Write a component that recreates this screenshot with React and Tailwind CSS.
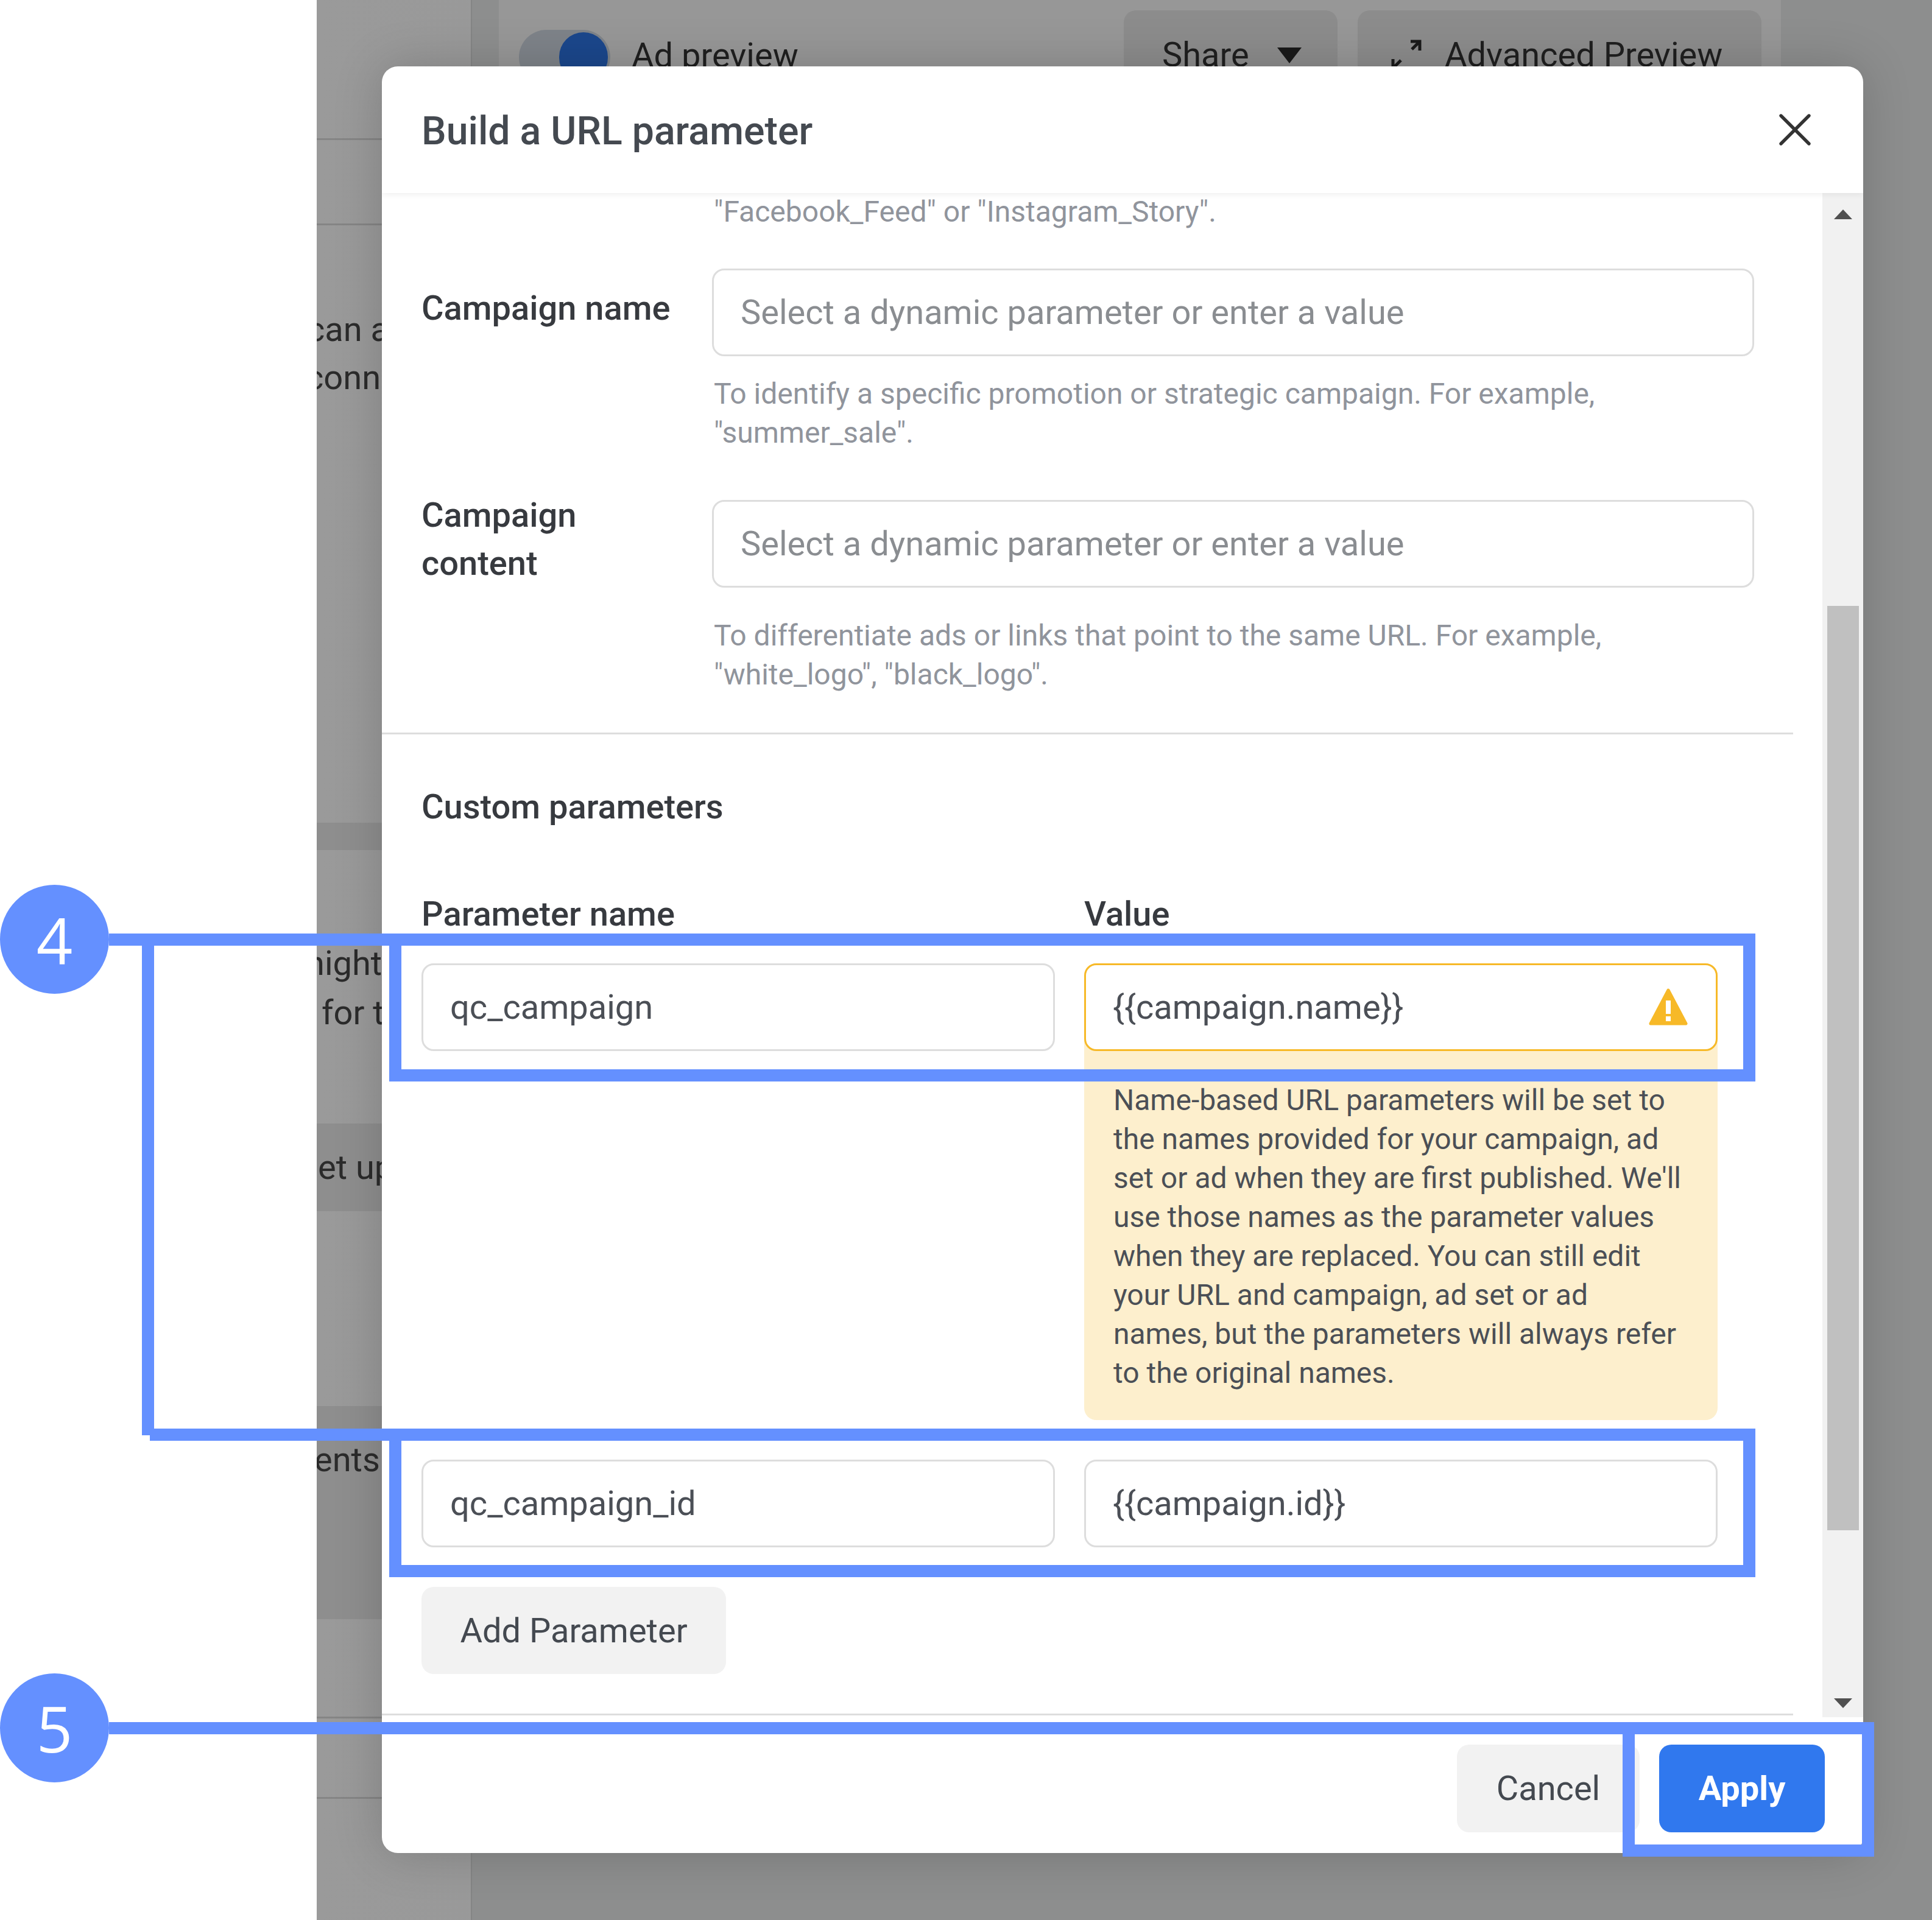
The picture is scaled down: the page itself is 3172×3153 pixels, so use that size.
import React from "react";
import { X } from "lucide-react";

const warningLines = [
  "Name-based URL parameters will be set to",
  "the names provided for your campaign, ad",
  "set or ad when they are first published. We'll",
  "use those names as the parameter values",
  "when they are replaced. You can still edit",
  "your URL and campaign, ad set or ad",
  "names, but the parameters will always refer",
  "to the original names.",
];

const Field = ({ value, placeholder, warning }) => (
  <div
    className={`flex h-[144px] items-center justify-between rounded-[20px] border-[3px] bg-white pl-[44px] pr-[46px] text-[56px] ${
      warning ? "border-[#f7b928]" : "border-[#dddddd]"
    } ${placeholder ? "text-[#8a8d91]" : "text-[#4b4f56]"}`}
  >
    <span className="whitespace-nowrap">{value || placeholder}</span>
    {warning && (
      <svg viewBox="0 0 64 62" className="h-[62px] w-[64px]">
        <path d="M32 3 L61 58 H3 Z" fill="#f7b928" stroke="#f7b928" strokeWidth="5" strokeLinejoin="round" />
        <rect x="28" y="20" width="8" height="22" fill="#fff" />
        <rect x="28" y="46" width="8" height="8" fill="#fff" />
      </svg>
    )}
  </div>
);

const Helper = ({ children, className = "" }) => (
  <p className={`pl-[3px] text-[48px] leading-[64px] whitespace-nowrap text-[#90949c] ${className}`}>{children}</p>
);

const Label = ({ children }) => (
  <div className="flex h-[144px] w-[477px] shrink-0 items-center pb-[14px] text-[56px] font-medium leading-[79px] text-[#373a3f]">
    <span>{children}</span>
  </div>
);

const SideRow = ({ h, dark, line, children, textClass = "" }) => (
  <div
    className={`relative whitespace-nowrap text-[56px] text-[#2b2b2b] ${h} ${dark ? "bg-[#8e8e8e]" : ""} ${
      line ? "border-b-[3px] border-[#858585]" : ""
    } ${textClass}`}
  >
    {children}
  </div>
);

const Background = () => (
  <div className="flex min-w-0 flex-1 overflow-hidden bg-gradient-to-r from-[#9a9a9a] to-[#8f9091]">
    <div className="w-[253px] shrink-0 overflow-hidden">
      <SideRow h="h-[230px]" line />
      <SideRow h="h-[140px]" line />
      <SideRow h="h-[981px]" textClass="pt-[132px] leading-[79px]">
        <div className="-ml-[16px]">can a</div>
        <div className="-ml-[18px]">conn</div>
      </SideRow>
      <SideRow h="h-[45px]" dark />
      <SideRow h="h-[449px]" textClass="pt-[146px] leading-[81px]">
        <div className="-ml-[18px]">night</div>
        <div className="ml-[8px]">for t</div>
      </SideRow>
      <SideRow h="h-[144px]" dark textClass="flex items-center">
        <div className="ml-[2px]">et up</div>
      </SideRow>
      <SideRow h="h-[320px]" />
      <SideRow h="h-[350px]" dark textClass="pt-[48px] leading-[80px]">
        <div className="-ml-[4px]">ents</div>
      </SideRow>
      <SideRow h="h-[163px]" line />
      <SideRow h="h-[132px]" line />
    </div>
    <div className="min-w-0 flex-1 border-l-[2px] border-[#848585] bg-[#8d8e8e]">
      <div className="ml-[44px] flex h-[200px] w-[2105px] items-start justify-between bg-[#979797] pl-[33px] pr-[32px] text-[56px] leading-[64px] text-[#1f1f1f]">
        <div className="flex items-start">
          <div className="mt-[49px] flex h-[90px] w-[150px] justify-end rounded-full bg-[#7e8389] p-[4px]">
            <div className="h-[82px] w-[80px] rounded-full bg-[#1b478c]"></div>
          </div>
          <span className="ml-[35px] mt-[59px] whitespace-nowrap">Ad preview</span>
        </div>
        <div className="flex items-start gap-[33px]">
          <div className="mt-[17px] flex h-[150px] w-[351px] items-start rounded-[20px] bg-[#8c8c8c] pl-[63px] pt-[41px]">
            Share
            <svg viewBox="0 0 40 26" className="ml-[46px] mt-[20px] h-[26px] w-[40px]">
              <path d="M0 0H40L20 26Z" fill="#1a1a1a" />
            </svg>
          </div>
          <div className="mt-[17px] flex h-[150px] w-[663px] items-start rounded-[20px] bg-[#8c8c8c] pl-[55px] pt-[41px]">
            <svg viewBox="0 0 50 50" className="mr-[38px] mt-[7px] h-[50px] w-[50px]" fill="none" stroke="#1a1a1a" strokeWidth="5">
              <path d="M32 3H47V18M47 3L34 16M3 32V47H18M3 47L16 34" />
            </svg>
            Advanced Preview
          </div>
        </div>
      </div>
    </div>
  </div>
);

const Modal = () => (
  <div className="absolute left-[627px] top-[109px] flex h-[2934px] w-[2432px] flex-col overflow-hidden rounded-[26px] bg-white shadow-[0_0_80px_rgba(0,0,0,0.18)]">
    <div className="relative z-10 flex h-[208px] shrink-0 items-center justify-between pl-[65px] pr-[66px] shadow-[0_2px_10px_rgba(0,0,0,0.07)]">
      <h1 className="pt-[5px] text-[64.4px] font-medium text-[#444950]">Build a URL parameter</h1>
      <X className="h-[92px] w-[92px] text-[#333]" strokeWidth={1.4} />
    </div>

    <div className="flex min-h-0 flex-1">
      <div className="w-[2365px] shrink-0 overflow-hidden pr-[48px]">
        <div className="pl-[65px] pr-[64px]">
          <Helper className="-mt-[1px] ml-[477px]">"Facebook_Feed" or "Instagram_Story".</Helper>

          <div className="mt-[61px] flex">
            <Label>Campaign name</Label>
            <div className="flex-1">
              <Field placeholder="Select a dynamic parameter or enter a value" />
              <Helper className="mt-[30px]">
                To identify a specific promotion or strategic campaign. For example,
                <br />
                "summer_sale".
              </Helper>
            </div>
          </div>

          <div className="mt-[78px] flex">
            <Label>
              Campaign
              <br />
              content
            </Label>
            <div className="flex-1">
              <Field placeholder="Select a dynamic parameter or enter a value" />
              <Helper className="mt-[47px]">
                To differentiate ads or links that point to the same URL. For example,
                <br />
                "white_logo", "black_logo".
              </Helper>
            </div>
          </div>
        </div>

        <div className="mt-[63px] h-[3px] bg-[#dddddd]"></div>

        <div className="pl-[65px] pr-[124px]">
          <h2 className="mt-[87px] text-[56px] font-medium leading-[64px] text-[#373a3f]">Custom parameters</h2>

          <div className="mt-[112px] grid grid-cols-2 gap-x-[48px] text-[56px] font-medium leading-[64px] text-[#373a3f]">
            <span>Parameter name</span>
            <span>Value</span>
          </div>

          <div className="mt-[49px] grid grid-cols-2 items-start gap-x-[48px]">
            <Field value="qc_campaign" />
            <div className="rounded-[20px] bg-[#fdefcd]">
              <Field value="{{campaign.name}}" warning />
              <div className="pb-[45px] pl-[48px] pt-[49px] text-[48px] leading-[64px] text-[#4b4f56]">
                {warningLines.map((line) => (
                  <div key={line} className="whitespace-nowrap">
                    {line}
                  </div>
                ))}
              </div>
            </div>
          </div>

          <div className="mt-[65px] grid grid-cols-2 gap-x-[48px]">
            <Field value="qc_campaign_id" />
            <Field value="{{campaign.id}}" />
          </div>

          <button className="mt-[65px] h-[143px] w-[500px] rounded-[20px] bg-[#f2f2f2] text-[56px] text-[#444950]">
            Add Parameter
          </button>
        </div>

        <div className="mt-[65px] h-[3px] bg-[#dddddd]"></div>
      </div>

      <div className="flex w-[67px] shrink-0 flex-col items-center bg-[#f1f1f1]">
        <svg viewBox="0 0 30 16" className="mt-[27px] h-[16px] w-[30px]">
          <path d="M15 0L30 16H0Z" fill="#505050" />
        </svg>
        <div className="mt-[635px] h-[1518px] w-[52px] bg-[#c0c0c0]"></div>
        <svg viewBox="0 0 30 16" className="mt-[276px] h-[16px] w-[30px]">
          <path d="M0 0H30L15 16Z" fill="#505050" />
        </svg>
      </div>
    </div>

    <div className="flex h-[223px] shrink-0 justify-end gap-[32px] pr-[63px] pt-[45px]">
      <button className="h-[144px] w-[300px] rounded-[20px] bg-[#f2f2f2] text-[56px] text-[#444950]">Cancel</button>
      <button className="h-[144px] w-[272px] rounded-[20px] bg-[#3078ee] text-[56px] font-bold text-white">Apply</button>
    </div>
  </div>
);

const Annotations = () => (
  <>
    <div className="absolute left-0 top-[1453px] flex h-[179px] w-[179px] items-center justify-center rounded-full bg-[#6490ff] font-['Open_Sans',sans-serif] text-[104px] text-white">
      4
    </div>
    <div className="absolute left-[179px] top-[1533px] h-[20px] w-[460px] bg-[#6490ff]"></div>
    <div className="absolute left-[233px] top-[1533px] h-[824px] w-[20px] bg-[#6490ff]"></div>
    <div className="absolute left-[246px] top-[2346px] h-[20px] w-[393px] bg-[#6490ff]"></div>
    <div className="absolute left-[639px] top-[1533px] h-[243px] w-[2243px] border-[20px] border-[#6490ff]"></div>
    <div className="absolute left-[639px] top-[2346px] h-[244px] w-[2243px] border-[20px] border-[#6490ff]"></div>

    <div className="absolute left-0 top-[2748px] flex h-[179px] w-[179px] items-center justify-center rounded-full bg-[#6490ff] font-['Open_Sans',sans-serif] text-[104px] text-white">
      5
    </div>
    <div className="absolute left-[179px] top-[2828px] h-[20px] w-[2485px] bg-[#6490ff]"></div>
    <div className="absolute left-[2664px] top-[2828px] h-[221px] w-[413px] border-[20px] border-[#6490ff]"></div>
  </>
);

export default function App() {
  return (
    <div className="relative flex h-[3153px] w-[3172px] overflow-hidden bg-white font-['Roboto',sans-serif]">
      <div className="w-[520px] shrink-0 bg-white"></div>
      <Background />
      <Modal />
      <Annotations />
    </div>
  );
}
